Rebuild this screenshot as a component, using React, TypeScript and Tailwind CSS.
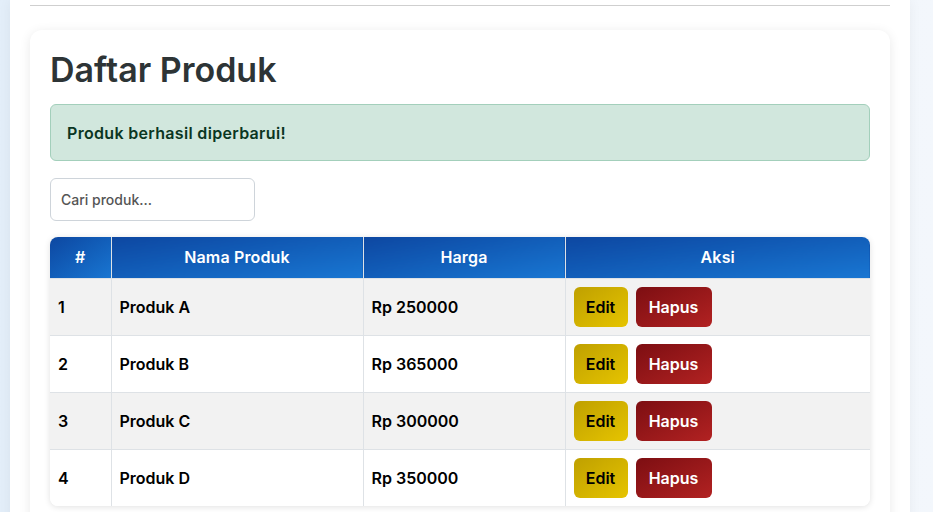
import React from 'react'

const products = [
  { id: 1, name: 'Produk A', price: 250000 },
  { id: 2, name: 'Produk B', price: 365000 },
  { id: 3, name: 'Produk C', price: 300000 },
  { id: 4, name: 'Produk D', price: 350000 },
]

const headCell =
  'border-r border-[#dee2e6] bg-gradient-to-br from-[#0d47a1] to-[#1976d2] px-2 text-center text-[16px] font-semibold tracking-[0.01em] text-white'

export default function App() {
  return (
    <div
      className="min-h-[512px] bg-gradient-to-r from-[#e3eef9] to-[#f3f7fc] px-[10px] text-[#212529]"
      style={{ fontFamily: 'Inter, "Noto Sans", sans-serif' }}
    >
      <div className="min-h-[512px] w-[900px] bg-white px-5 shadow-[0_0_12px_rgba(0,0,0,0.05)]">
        <div className="h-[6px] border-b border-[#cfcfcf]" />

        <div className="mt-6 rounded-xl bg-white px-5 pb-6 pt-[18px] shadow-[0_2px_12px_rgba(0,0,0,0.09)]">
          <h1 className="text-[34px] font-semibold leading-[44px] text-[#2d3436]">Daftar Produk</h1>

          <div className="mt-3 flex h-[57px] items-center rounded-md border border-[#a3cfbb] bg-[#d1e7dd] px-4 text-[16px] font-semibold tracking-[0.02em] text-[#0a3622]">
            Produk berhasil diperbarui!
          </div>

          <input
            type="text"
            placeholder="Cari produk..."
            className="mt-[17px] block h-[43px] w-[205px] rounded-md border border-[#ced4da] px-[10px] text-[14px] font-medium text-[#555] placeholder:text-[#555] outline-none"
          />

          <div className="mt-4 overflow-hidden rounded-lg shadow-[0_1px_6px_rgba(0,0,0,0.12)]">
            <table className="w-full border-collapse">
              <thead>
                <tr className="h-[41px]">
                  <th className={`${headCell} w-[61px]`}>#</th>
                  <th className={`${headCell} w-[252px]`}>Nama Produk</th>
                  <th className={`${headCell} w-[202px]`}>Harga</th>
                  <th className={`${headCell} border-r-0`}>Aksi</th>
                </tr>
              </thead>
              <tbody>
                {products.map((p, i) => (
                  <tr
                    key={p.id}
                    className={`h-[57px] border-t border-[#dee2e6] text-[16px] font-semibold text-black ${i % 2 === 0 ? 'bg-[#f2f2f2]' : 'bg-white'}`}
                  >
                    <td className="border-r border-[#dee2e6] px-2">{p.id}</td>
                    <td className="border-r border-[#dee2e6] px-2">{p.name}</td>
                    <td className="border-r border-[#dee2e6] px-2">Rp {p.price}</td>
                    <td className="px-2">
                      <div className="flex gap-2">
                        <button className="h-10 w-[54px] rounded-md bg-gradient-to-br from-[#bfa000] to-[#e6c400] text-[16px] font-semibold text-black">
                          Edit
                        </button>
                        <button className="h-10 w-[76px] rounded-md bg-gradient-to-br from-[#7d0e12] to-[#b22222] text-[16px] font-semibold text-white">
                          Hapus
                        </button>
                      </div>
                    </td>
                  </tr>
                ))}
              </tbody>
            </table>
          </div>
        </div>
      </div>
    </div>
  )
}
